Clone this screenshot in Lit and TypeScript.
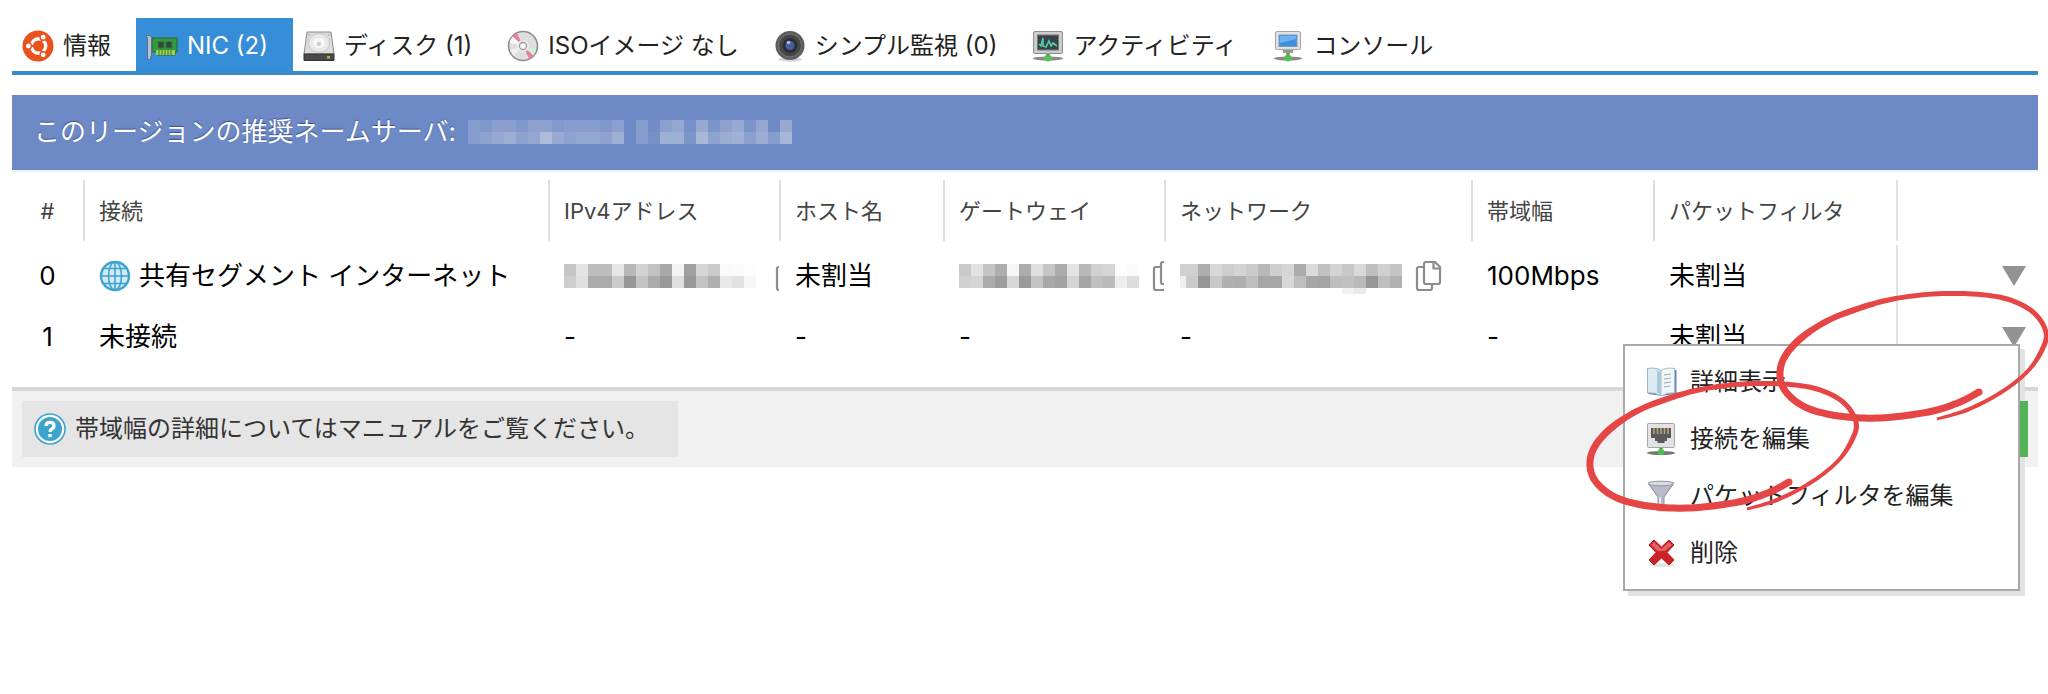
import { LitElement, html, svg, css, nothing } from "lit";
import { customElement, property, state } from "lit/decorators.js";
import { classMap } from "lit/directives/class-map.js";

const icons: Record<string, unknown> = {
  ubuntu: svg`
    <circle cx="16" cy="16" r="15.5" fill="#e8521f"/>
    <circle cx="16.5" cy="16" r="7.2" fill="none" stroke="#fff" stroke-width="3.4"/>
    <g stroke="#e8521f" stroke-width="1.8">
      <path d="M16.500 16L5 16M16.500 16L22 6.500M16.500 16L22 25.500"/>
    </g>
    <circle cx="16.500" cy="16" r="5" fill="#e8521f"/>
    <g fill="#fff" stroke="#e8521f" stroke-width="1.400">
      <circle cx="6.400" cy="16" r="3.100"/><circle cx="21.200" cy="7.200" r="3.100"/><circle cx="21.200" cy="24.800" r="3.100"/>
    </g>`,
  nic: svg`
    <path d="M6 8H31V22H29V25H11V22H6Z" fill="#2f9a3f" stroke="#1e6a31"/>
    <path d="M10 20H29V25H10Z" fill="#a9cf48"/>
    <path d="M13 20V25M16 20V25M19 20V25M22 20V25M25 20V25" stroke="#3a8a3a" stroke-width="1.200"/>
    <path d="M12 11.500H18V18H12ZM20 11.500H26V18H20Z" fill="#2e4a33" stroke="#3f7a42"/>
    <path d="M0.500 5.500H3.500L5.500 7V25L4 29.500H1.500V7.500H0.500Z" fill="#b4c2d2" stroke="#5d6d7d"/>`,
  disk: svg`
    <path d="M4 2H28L31 24H1Z" fill="#dcdcdc" stroke="#8a8a8a"/>
    <path d="M1 24H31V30.500H1Z" fill="#4a4a4a" stroke="#333"/>
    <ellipse cx="16" cy="13" rx="10.500" ry="9.500" fill="#e9e9e9" stroke="#c9c9c9"/>
    <ellipse cx="16" cy="13" rx="6" ry="5" fill="#f8f8f8"/>
    <circle cx="16" cy="14" r="2.200" fill="#cfcfcf"/>
    <circle cx="6" cy="5" r=".8" fill="#999"/><circle cx="26" cy="5" r=".8" fill="#999"/>
    <rect x="24" y="26" width="3" height="2.500" fill="#b8ad4a"/>`,
  disc: svg`
    <circle cx="16" cy="16" r="14.500" fill="#dedede" stroke="#8d8d8d" stroke-width="1.600"/>
    <path d="M16 16L5.500 6.500A14 14 0 0 1 10 3.500Z" fill="#ee7d9d"/>
    <path d="M16 16L26.500 25.500A14 14 0 0 1 22 28.500Z" fill="#ee7d9d"/>
    <path d="M16 16L2.800 13A14 14 0 0 1 5.500 6.500Z" fill="#f6f6f6"/>
    <path d="M16 16L29.200 19A14 14 0 0 1 26.500 25.500Z" fill="#cfeecb"/>
    <path d="M16 16L3.500 20A14 14 0 0 0 7 26Z" fill="#efefef"/>
    <circle cx="16" cy="16" r="6" fill="#ececec"/>
    <circle cx="16" cy="16" r="3.500" fill="#fff" stroke="#999" stroke-width="1.300"/>`,
  lens: svg`
    <ellipse cx="16" cy="29.500" rx="12" ry="2.200" fill="#d6d6d6"/>
    <circle cx="16" cy="15.500" r="14.500" fill="#5d5d5d"/>
    <circle cx="16" cy="15.500" r="11.500" fill="#474747" stroke="#767676"/>
    <circle cx="16" cy="15.500" r="7.500" fill="#2b2e38"/>
    <circle cx="16" cy="15.500" r="4.500" fill="#46619f"/>
    <circle cx="14.500" cy="12.500" r="1.800" fill="#a9bdec"/>`,
  activity: svg`
    <ellipse cx="16" cy="28.500" rx="15" ry="2" fill="#8b8b8b"/>
    <path d="M14.500 23H17.500V28H14.500Z" fill="#4a8a4a"/>
    <rect x="1.500" y="1.500" width="29" height="22" rx="1.500" fill="#cdcdcd" stroke="#8f8f8f"/>
    <rect x="5.500" y="5" width="21" height="15" fill="#384248" stroke="#777"/>
    <path d="M7 14L9 16L11 8V16L14 17L17 11L19 16L21 13L25 16" fill="none" stroke="#4fd0a0" stroke-width="1.600"/>
    <circle cx="16" cy="28" r="3.400" fill="#4fc44f"/>`,
  console: svg`
    <ellipse cx="16" cy="28.500" rx="14" ry="2" fill="#8b8b8b"/>
    <path d="M14.500 22H17.500V28H14.500Z" fill="#4a8a4a"/>
    <path d="M11 18H21V23H11Z" fill="#999"/>
    <rect x="3.500" y="1.500" width="25" height="18" rx="1.500" fill="#e2e2e2" stroke="#a6a6a6"/>
    <rect x="7" y="5" width="18" height="11.500" fill="#3f8fe0" stroke="#7b99b8"/>
    <path d="M8 13L24 9V6H8Z" fill="#6fb0f0"/>
    <circle cx="16" cy="28" r="3.400" fill="#4fc44f"/>`,
  globe: svg`
    <circle cx="16" cy="16" r="14" fill="#d3eaf6" stroke="#3da3cf" stroke-width="2.400"/>
    <g fill="none" stroke="#3da3cf" stroke-width="1.600">
      <ellipse cx="16" cy="16" rx="6.500" ry="14"/>
      <path d="M16 2V30M2 16H30M4.500 8.500H27.500M4.500 23.500H27.500"/>
    </g>`,
  help: svg`
    <circle cx="16" cy="16" r="15" fill="#fff" stroke="#3da3cf" stroke-width="1.600"/>
    <circle cx="16" cy="16" r="12" fill="#3da3cf"/>
    <path d="M12 13Q12 9.300 16 9.300T20 12.800Q20 15 17.800 16Q16 17 16 19" fill="none" stroke="#fff" stroke-width="3.200"/>
    <rect x="14.300" y="21" width="3.400" height="3.200" fill="#fff"/>`,
  copy: svg`
    <g fill="none" stroke="#8c8c8c" stroke-width="2.200" stroke-linejoin="round">
      <path d="M9 7H5Q3 7 3 9V28Q3 30 5 30H16Q18 30 18 28V25"/>
      <path d="M12 2H21L26 7V22Q26 24 24 24H12Q10 24 10 22V4Q10 2 12 2Z"/>
      <path d="M19.500 2V8.500H26"/>
    </g>`,
  book: svg`
    <path d="M0.500 4H3V28L14 29.500H19L31.500 28V4H29" fill="#5f86cc"/>
    <path d="M2.500 2.500Q11 1 16 4.500V30Q10 26 2.500 27Z" fill="#dceaf4" stroke="#9fb4c4"/>
    <path d="M16 4.500Q21 1 29.500 2.500V27Q22 26 16 30Z" fill="#f1f7f9" stroke="#a9bcc5"/>
    <path d="M12 4Q15 5 16 7V29Q14 27 12 27Z" fill="#a9cad9"/>
    <path d="M19 9L26 8M19 13L26 12M19 17L26 16M19 21L25 20" stroke="#9ab0b5" stroke-width="1.200"/>`,
  port: svg`
    <ellipse cx="16" cy="30" rx="14" ry="2" fill="#777"/>
    <path d="M14.500 23H17.500V29H14.500Z" fill="#3f8f3f"/>
    <rect x="2.500" y=".5" width="27" height="24" rx="1" fill="#e3e3e6" stroke="#a6a6aa"/>
    <path d="M6 5H26V15H22V18H19.500V20H12.500V18H10V15H6Z" fill="#5a5a5a"/>
    <path d="M9 5V11M12.500 5V11M16 5V11M19.500 5V11M23 5V11" stroke="#c0a878" stroke-width="1.500"/>
    <circle cx="16" cy="29" r="3.200" fill="#4fbf4f"/>`,
  funnel: svg`
    <ellipse cx="16" cy="30" rx="5" ry="1.500" fill="#ccc"/>
    <path d="M3 3L13 17V29H19V17L29 3Z" fill="#b9bac8" stroke="#8d8e9c"/>
    <path d="M14 17H16V29H14Z" fill="#e8e8f0"/>
    <ellipse cx="16" cy="3.500" rx="13" ry="2.300" fill="#dcdce6" stroke="#94949f"/>`,
  cross: svg`
    <ellipse cx="17" cy="28" rx="13" ry="2" fill="#e4e4e4"/>
    <path d="M4 8L9 3L16.500 10L24 3L29 8L22 15.500L29 23L24 28L16.500 21L9 28L4 23L11 15.500Z" fill="#cf2226" stroke="#ad1a1d" stroke-linejoin="round"/>
    <path d="M6 8L9 5L16.500 12L24 5L27 8L20 14H13Z" fill="#e46264"/>`,
};

@customElement("ui-icon")
class UiIcon extends LitElement {
  static styles = css`
    :host { display: inline-flex; flex: none; width: 32px; height: 32px; }
    .glyph { width: 100%; height: 100%; display: block; }
  `;
  @property() name = "";
  render() {
    return html`<svg class="glyph" viewBox="0 0 32 32" aria-hidden="true">${icons[this.name] ?? nothing}</svg>`;
  }
}

type Mosaic = { first?: number; width: number; rows: string[][] };

const CELL = 12;
const greys = (s: string) => s.split(" ").map((v) => (v === "--" ? "none" : `#${v}${v}${v}`));
const tints = (s: string) => s.split(" ").map((v) => `rgba(240,238,235,0.${v})`);

function mosaic(m: Mosaic) {
  const first = m.first ?? CELL;
  return html`<svg class="mosaic" width=${m.width} height="24" shape-rendering="crispEdges" aria-hidden="true">
    ${m.rows.map((row, y) =>
      row.map((fill, i) => svg`<rect
        x=${i === 0 ? 0 : first + (i - 1) * CELL} y=${y * CELL}
        width=${i === 0 ? first : CELL} height=${y === 2 ? 6 : CELL} fill=${fill}/>`)
    )}
  </svg>`;
}

const NAMESERVERS: Mosaic = {
  width: 324,
  rows: [
    tints("20 14 22 22 14 24 24 16 20 20 20 15 23 00 20 04 23 31 07 33 12 24 32 12 30 00 33"),
    tints("20 25 31 37 24 29 50 33 26 29 29 26 38 00 20 08 38 38 13 47 26 36 40 23 36 20 45"),
  ],
};
const IPV4: Mosaic = {
  width: 198,
  rows: [
    greys("c6 e4 bd bd e6 b8 d3 c2 a8 f3 a0 d6 cb fa fb fd"),
    greys("cd e0 ab ab cb 96 c3 ab 98 e0 98 c4 b0 e9 e2 f7"),
  ],
};
const GATEWAY: Mosaic = {
  width: 180,
  rows: [
    greys("c9 e3 c5 ae f6 ac e0 c5 ab e4 b8 d1 d5 fd fa"),
    greys("d0 d5 ab 9d d8 9a c5 a8 a3 d5 a4 c0 ba ed dd"),
  ],
};
const NETWORK: Mosaic = {
  first: 6,
  width: 222,
  rows: [
    greys("d0 d0 ad d8 cd d4 cb b8 ce d5 ac db c0 d3 c7 d9 bf d0 c5"),
    greys("f0 cb 96 c8 b0 ae bf a6 a6 d8 be a6 a4 be c0 b9 96 be b1"),
    greys("-- -- -- -- -- -- -- -- -- -- -- -- -- -- f3 ea"),
  ],
};

/* Pen loop: x, y, pen width at each knot. */
const LOOP: [number, number, number][] = [
  [165, 129, 3], [195, 120, 4], [228, 103, 4], [255, 82, 4], [270, 60, 5], [274, 42, 5],
  [261, 22, 5], [235, 9, 5], [201, 4, 5], [161, 4, 5], [121, 9, 5], [88, 18, 6], [55, 31, 6],
  [28, 49, 7], [12, 68, 7], [8, 86, 7], [14, 102, 7], [31, 116, 7], [55, 124, 7], [88, 128, 7],
  [121, 127, 7], [161, 121, 7], [188, 112, 7], [207, 102, 7],
];

function penOutline(knots: [number, number, number][]) {
  const at = (i: number) => knots[Math.max(0, Math.min(knots.length - 1, i))];
  const pts: number[][] = [];
  for (let i = 0; i < knots.length - 1; i++) {
    for (let s = 0; s < 8; s++) {
      const t = s / 8;
      pts.push([0, 1, 2].map((k) => {
        const [a, b, c, d] = [at(i - 1)[k], at(i)[k], at(i + 1)[k], at(i + 2)[k]];
        return 0.5 * (2 * b + (c - a) * t + (2 * a - 5 * b + 4 * c - d) * t * t + (3 * b - a - 3 * c + d) * t * t * t);
      }));
    }
  }
  pts.push([...at(knots.length - 1)]);
  const side = (sign: number) => pts.map(([x, y, w], i) => {
    const p = pts[Math.max(0, i - 1)];
    const n = pts[Math.min(pts.length - 1, i + 1)];
    const len = Math.hypot(n[0] - p[0], n[1] - p[1]) || 1;
    return `${(x - (sign * (n[1] - p[1]) * w) / 2 / len).toFixed(1)} ${(y + (sign * (n[0] - p[0]) * w) / 2 / len).toFixed(1)}`;
  });
  return `M${[...side(1), ...side(-1).reverse()].join("L")}Z`;
}

const loopShape = svg`<path d=${penOutline(LOOP)}/><circle cx="207" cy="102" r="3.5"/>`;

const TABS = [
  { icon: "ubuntu", label: "情報" },
  { icon: "nic", label: "NIC (2)" },
  { icon: "disk", label: "ディスク (1)" },
  { icon: "disc", label: "ISOイメージ なし" },
  { icon: "lens", label: "シンプル監視 (0)" },
  { icon: "activity", label: "アクティビティ" },
  { icon: "console", label: "コンソール" },
];

const COLUMNS = [
  { key: "num", label: "#" },
  { key: "conn", label: "接続" },
  { key: "ip", label: "IPv4アドレス" },
  { key: "host", label: "ホスト名" },
  { key: "gate", label: "ゲートウェイ" },
  { key: "net", label: "ネットワーク" },
  { key: "band", label: "帯域幅" },
  { key: "filter", label: "パケットフィルタ" },
  { key: "act", label: "" },
];

const MENU = [
  { icon: "book", label: "詳細表示" },
  { icon: "port", label: "接続を編集" },
  { icon: "funnel", label: "パケットフィルタを編集" },
  { icon: "cross", label: "削除" },
];

const ROWS = [
  { conn: "共有セグメント インターネット", shared: true, ip: IPV4, host: "未割当", gate: GATEWAY, net: NETWORK, band: "100Mbps", filter: "未割当" },
  { conn: "未接続", shared: false, ip: null, host: "-", gate: null, net: null, band: "-", filter: "未割当" },
];

@customElement("app-root")
class AppRoot extends LitElement {
  static styles = css`
    :host {
      display: block;
      box-sizing: border-box;
      min-height: 100vh;
      padding: 18px 10px 0 12px;
      font-family: Inter, "Noto Sans CJK JP", sans-serif;
      font-size: 26px;
      line-height: 32px;
      color: #000;
      background: #fff;
    }
    button, a { font: inherit; color: inherit; text-decoration: none; background: none; border: 0; margin: 0; padding: 0; cursor: pointer; }
    .tabs { display: flex; height: 53px; border-bottom: 4px solid #3a8ac8; }
    .tab { display: flex; align-items: center; gap: 9px; padding: 3px 25px 0 10px; font-size: 24px; color: #222; white-space: nowrap; }
    .tab.active { background: #368dd8; color: #fff; }
    .banner {
      display: flex; align-items: center; gap: 12px;
      margin-top: 20px; padding: 21px 22px 22px;
      background: #6d89c6; color: #fff; text-shadow: 0 -1px 1px rgba(30, 45, 90, 0.6);
    }
    .mosaic { display: block; flex: none; overflow: visible; }
    .list { border-top: 2px solid #eaf5ff; padding: 8px 0 20px; }
    table { width: 100%; table-layout: fixed; border-collapse: separate; border-spacing: 0; }
    tbody::before { content: ""; display: block; height: 4px; }
    th, td { height: 61px; box-sizing: border-box; padding: 0 0 0 14px; border-left: 2px solid transparent; text-align: left; white-space: nowrap; overflow: hidden; }
    th { font-size: 22px; font-weight: 400; color: #444; border-left-color: #ddd; }
    .num { width: 71px; padding: 0; border-left: 0; text-align: center; }
    .ip { width: 231px; }
    .host { width: 164px; }
    .gate { width: 221px; }
    .net { width: 307px; }
    .band { width: 182px; }
    .filter { width: 243px; }
    .act { width: 142px; position: relative; overflow: visible; padding: 0 12px 0 0; border-left-color: #e2e2e2; }
    .cell { display: flex; align-items: center; }
    .conn .cell { gap: 8px; }
    .masked { gap: 12px; }
    .copy, .toggle { display: flex; flex: none; }
    .toggle { margin-left: auto; }
    .arrow { display: block; width: 24px; height: 20px; fill: #929292; }
    .menu, .shade { position: absolute; top: 38px; right: 18px; width: 397px; height: 247px; box-sizing: border-box; }
    .shade { z-index: 1; box-shadow: 5px 5px 0 #e2e2e2; }
    .menu { z-index: 3; padding: 7px 0; border: 2px solid #a9a9a9; background: #fff; }
    .item { display: flex; align-items: center; gap: 13px; width: 100%; height: 57px; padding: 0 20px; font-size: 24px; color: #222; }
    .pen { position: absolute; z-index: 4; top: -56px; right: -30px; width: 466px; height: 224px; fill: #e64545; pointer-events: none; overflow: hidden; }
    .footer { display: flex; justify-content: space-between; padding: 10px; border-top: 4px solid #d6d6d6; background: #f1f1f1; }
    .help { display: flex; align-items: center; gap: 9px; height: 56px; padding: 0 29px 0 12px; background: #e5e5e5; font-size: 24px; color: #333; }
    .add { position: relative; z-index: 2; width: 160px; height: 56px; background: #53b157; }
  `;

  @state() private active = 1;
  @state() private open = 1;

  private masked(m: Mosaic | null) {
    return m
      ? html`<div class="cell masked">${mosaic(m)}<button class="copy" aria-label="コピー"><ui-icon name="copy"></ui-icon></button></div>`
      : html`-`;
  }

  private menu() {
    return html`<div class="shade"></div>
    <div class="menu" role="menu">
      ${MENU.map((m) => html`<button class="item" role="menuitem"><ui-icon name=${m.icon}></ui-icon>${m.label}</button>`)}
      <svg class="pen" viewBox="0 0 466 224" aria-hidden="true">
        <g transform="translate(190 0)">${loopShape}</g>
        <g transform="translate(0 90)">${loopShape}</g>
      </svg>
    </div>`;
  }

  render() {
    return html`
      <nav class="tabs" role="tablist">
        ${TABS.map((t, i) => html`<button
          class=${classMap({ tab: true, active: i === this.active })}
          role="tab" aria-selected=${i === this.active}
          @click=${() => (this.active = i)}><ui-icon name=${t.icon}></ui-icon>${t.label}</button>`)}
      </nav>
      <div class="banner"><span>このリージョンの推奨ネームサーバ:</span>${mosaic(NAMESERVERS)}</div>
      <div class="list">
        <table>
          <thead><tr>${COLUMNS.map((c) => html`<th class=${c.key} scope="col">${c.label}</th>`)}</tr></thead>
          <tbody>
            ${ROWS.map((r, i) => html`<tr>
              <td class="num">${i}</td>
              <td class="conn"><div class="cell">${r.shared ? html`<ui-icon name="globe"></ui-icon>` : nothing}${r.conn}</div></td>
              <td class="ip">${this.masked(r.ip)}</td>
              <td class="host">${r.host}</td>
              <td class="gate">${this.masked(r.gate)}</td>
              <td class="net">${this.masked(r.net)}</td>
              <td class="band">${r.band}</td>
              <td class="filter">${r.filter}</td>
              <td class="act">
                <button class="toggle" aria-label="メニュー" aria-expanded=${this.open === i}
                  @click=${() => (this.open = this.open === i ? -1 : i)}>
                  <svg class="arrow" viewBox="0 0 24 20" aria-hidden="true"><path d="M0 0H24L12 20Z"/></svg>
                </button>
                ${this.open === i ? this.menu() : nothing}
              </td>
            </tr>`)}
          </tbody>
        </table>
      </div>
      <footer class="footer">
        <a class="help" href="#manual"><ui-icon name="help"></ui-icon>帯域幅の詳細についてはマニュアルをご覧ください。</a>
        <button class="add" aria-label="追加"></button>
      </footer>
    `;
  }
}
